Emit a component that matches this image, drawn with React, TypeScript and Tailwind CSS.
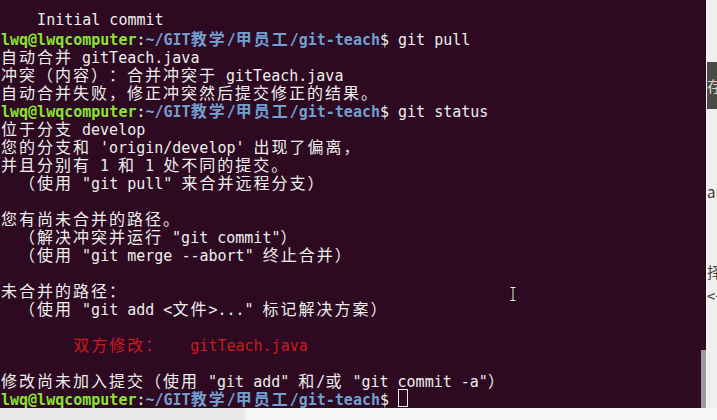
import React from "react";

type Seg = { t: string; c?: string; b?: boolean };

const GREEN = "text-[#8ae234]";
const BLUE = "text-[#729fcf]";
const RED = "text-[#cc1b1b]";

const isWide = (ch: string) => (ch.codePointAt(0) ?? 0) >= 0x2e80;

// terminal cells: ascii = 9px, CJK = 2 cells
function Cells({ seg }: { seg: Seg }) {
  const parts: React.ReactNode[] = [];
  let buf = "";
  const flush = () => {
    if (buf) {
      parts.push(<span key={parts.length}>{buf}</span>);
      buf = "";
    }
  };
  for (const ch of seg.t) {
    if (isWide(ch)) {
      flush();
      parts.push(
        <span
          key={parts.length}
          className="inline-block w-[18px] text-[16px] leading-[18px] font-['Noto_Sans_CJK_SC',sans-serif]"
        >
          {ch}
        </span>
      );
    } else buf += ch;
  }
  flush();
  return <span className={`${seg.c ?? ""} ${seg.b ? "font-bold" : ""}`}>{parts}</span>;
}

const prompt: Seg[] = [
  { t: "lwq@lwqcomputer", c: GREEN, b: true },
  { t: ":" },
  { t: "~/GIT教学/甲员工/git-teach", c: BLUE, b: true },
  { t: "$" },
];

const lines: Seg[][] = [
  [{ t: "    Initial commit" }],
  [...prompt, { t: " git pull" }],
  [{ t: "自动合并 gitTeach.java" }],
  [{ t: "冲突（内容）：合并冲突于 gitTeach.java" }],
  [{ t: "自动合并失败，修正冲突然后提交修正的结果。" }],
  [...prompt, { t: " git status" }],
  [{ t: "位于分支 develop" }],
  [{ t: "您的分支和 'origin/develop' 出现了偏离，" }],
  [{ t: "并且分别有 1 和 1 处不同的提交。" }],
  [{ t: "  （使用 \"git pull\" 来合并远程分支）" }],
  [],
  [{ t: "您有尚未合并的路径。" }],
  [{ t: "  （解决冲突并运行 \"git commit\"）" }],
  [{ t: "  （使用 \"git merge --abort\" 终止合并）" }],
  [],
  [{ t: "未合并的路径：" }],
  [{ t: "  （使用 \"git add <文件>...\" 标记解决方案）" }],
  [],
  [{ t: "        " }, { t: "双方修改：   gitTeach.java", c: RED }],
  [],
  [{ t: "修改尚未加入提交（使用 \"git add\" 和/或 \"git commit -a\"）" }],
  [...prompt, { t: " " }],
];

function IBeam() {
  return (
    <svg width="8" height="16" viewBox="0 0 8 16" className="absolute left-[509px] top-[286px]">
      <path d="M1 1.5h6M4 1.5v13M1 14.5h6" stroke="#111" strokeWidth="3" fill="none" />
      <path d="M1.5 1.5h5M4 1.5v13M1.5 14.5h5" stroke="#f4f1dc" strokeWidth="1" fill="none" />
    </svg>
  );
}

export default function App() {
  return (
    <div className="w-[717px] h-[420px] overflow-hidden flex flex-col bg-[#ececec]">
      <div className="flex h-[408px]">
        {/* terminal */}
        <div className="relative w-[706px] h-[408px] bg-[#2d0a22] text-[#eeeeec] text-[15px] font-['DejaVu_Sans_Mono','Noto_Sans_CJK_SC',monospace] pt-[11px] pl-[1px] overflow-hidden">
          {lines.map((segs, i) => (
            <div key={i} className="h-[18px] leading-[18px] whitespace-pre">
              {segs.map((s, j) => (
                <Cells key={j} seg={s} />
              ))}
              {i === lines.length - 1 && (
                <span className="inline-block w-[10px] h-[18px] align-top border border-[#eeeeec]" />
              )}
            </div>
          ))}
          <div className="absolute right-0 top-[350px] w-[5px] h-[58px] bg-[#9c9a9c]" />
          <IBeam />
        </div>

        {/* neighbouring window peeking in */}
        <div className="w-[11px] flex flex-col bg-[#f0efee] border-l border-[#f7f7f7] text-[15px] font-['Noto_Sans_CJK_SC',sans-serif] overflow-hidden whitespace-pre">
          <div className="mt-[62px] h-[47px] bg-[#4b4a45] text-[#d8d8d2] leading-[47px]">存</div>
          <div className="mt-[74px] leading-[18px] text-[#3a3a3a]">
            a<span className="text-[#2c5d9a]">r</span>
          </div>
          <div className="mt-[62px] leading-[18px] text-[#444]">择</div>
          <div className="mt-[6px] leading-[18px] text-[#444]">&lt;亻</div>
        </div>
      </div>

      <div className="flex h-[12px]">
        <div className="w-[245px] bg-[#e9e9e9]" />
        <div className="flex-1 bg-[#f6f6f6]" />
      </div>
    </div>
  );
}
